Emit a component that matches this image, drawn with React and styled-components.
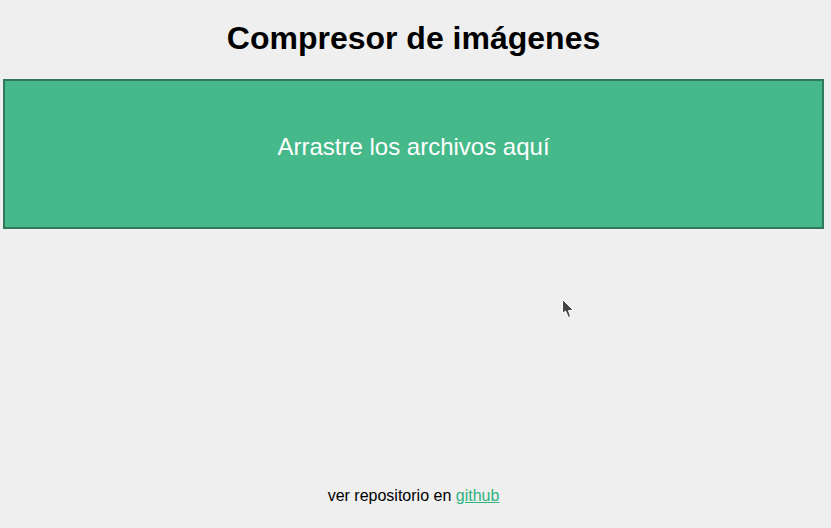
import React from 'react'
import styled, { createGlobalStyle } from 'styled-components'

const GlobalStyle = createGlobalStyle`
  html, body {
    margin: 0;
    padding: 0;
    background: #efefef;
    font-family: "Liberation Sans", Arial, sans-serif;
  }
`

const Page = styled.div`
  display: flex;
  flex-direction: column;
  min-height: 100vh;
  box-sizing: border-box;
  padding: 0 7px 23px 3px;
  position: relative;
`

const Title = styled.h1`
  margin: 20px 0 22px;
  font-size: 32px;
  font-weight: bold;
  text-align: center;
  color: #000;
`

const DropZone = styled.div`
  box-sizing: border-box;
  height: 150px;
  padding-top: 52px;
  background: #46b98a;
  border: 2px solid #307a5a;
  color: #fff;
  font-size: 24px;
  text-align: center;
`

const Footer = styled.footer`
  margin-top: auto;
  font-size: 16px;
  text-align: center;
  color: #000;
  a {
    color: #2fb380;
  }
`

const Pointer = styled.svg`
  position: absolute;
  left: 561px;
  top: 298px;
`

export default function App() {
  return (
    <>
      <GlobalStyle />
      <Page>
        <Title>Compresor de imágenes</Title>
        <DropZone>Arrastre los archivos aquí</DropZone>
        <Footer>
          ver repositorio en <a href="#">github</a>
        </Footer>
        <Pointer width="16" height="22" viewBox="0 0 16 22">
          <path
            d="M1.5 1.5 L1.5 15.5 L4.5 13 L7.5 19.5 L9.5 18.5 L7.5 12.5 L12.5 12.5 Z"
            fill="#444"
            stroke="#fff"
            strokeWidth="1"
            strokeLinejoin="round"
          />
        </Pointer>
      </Page>
    </>
  )
}
